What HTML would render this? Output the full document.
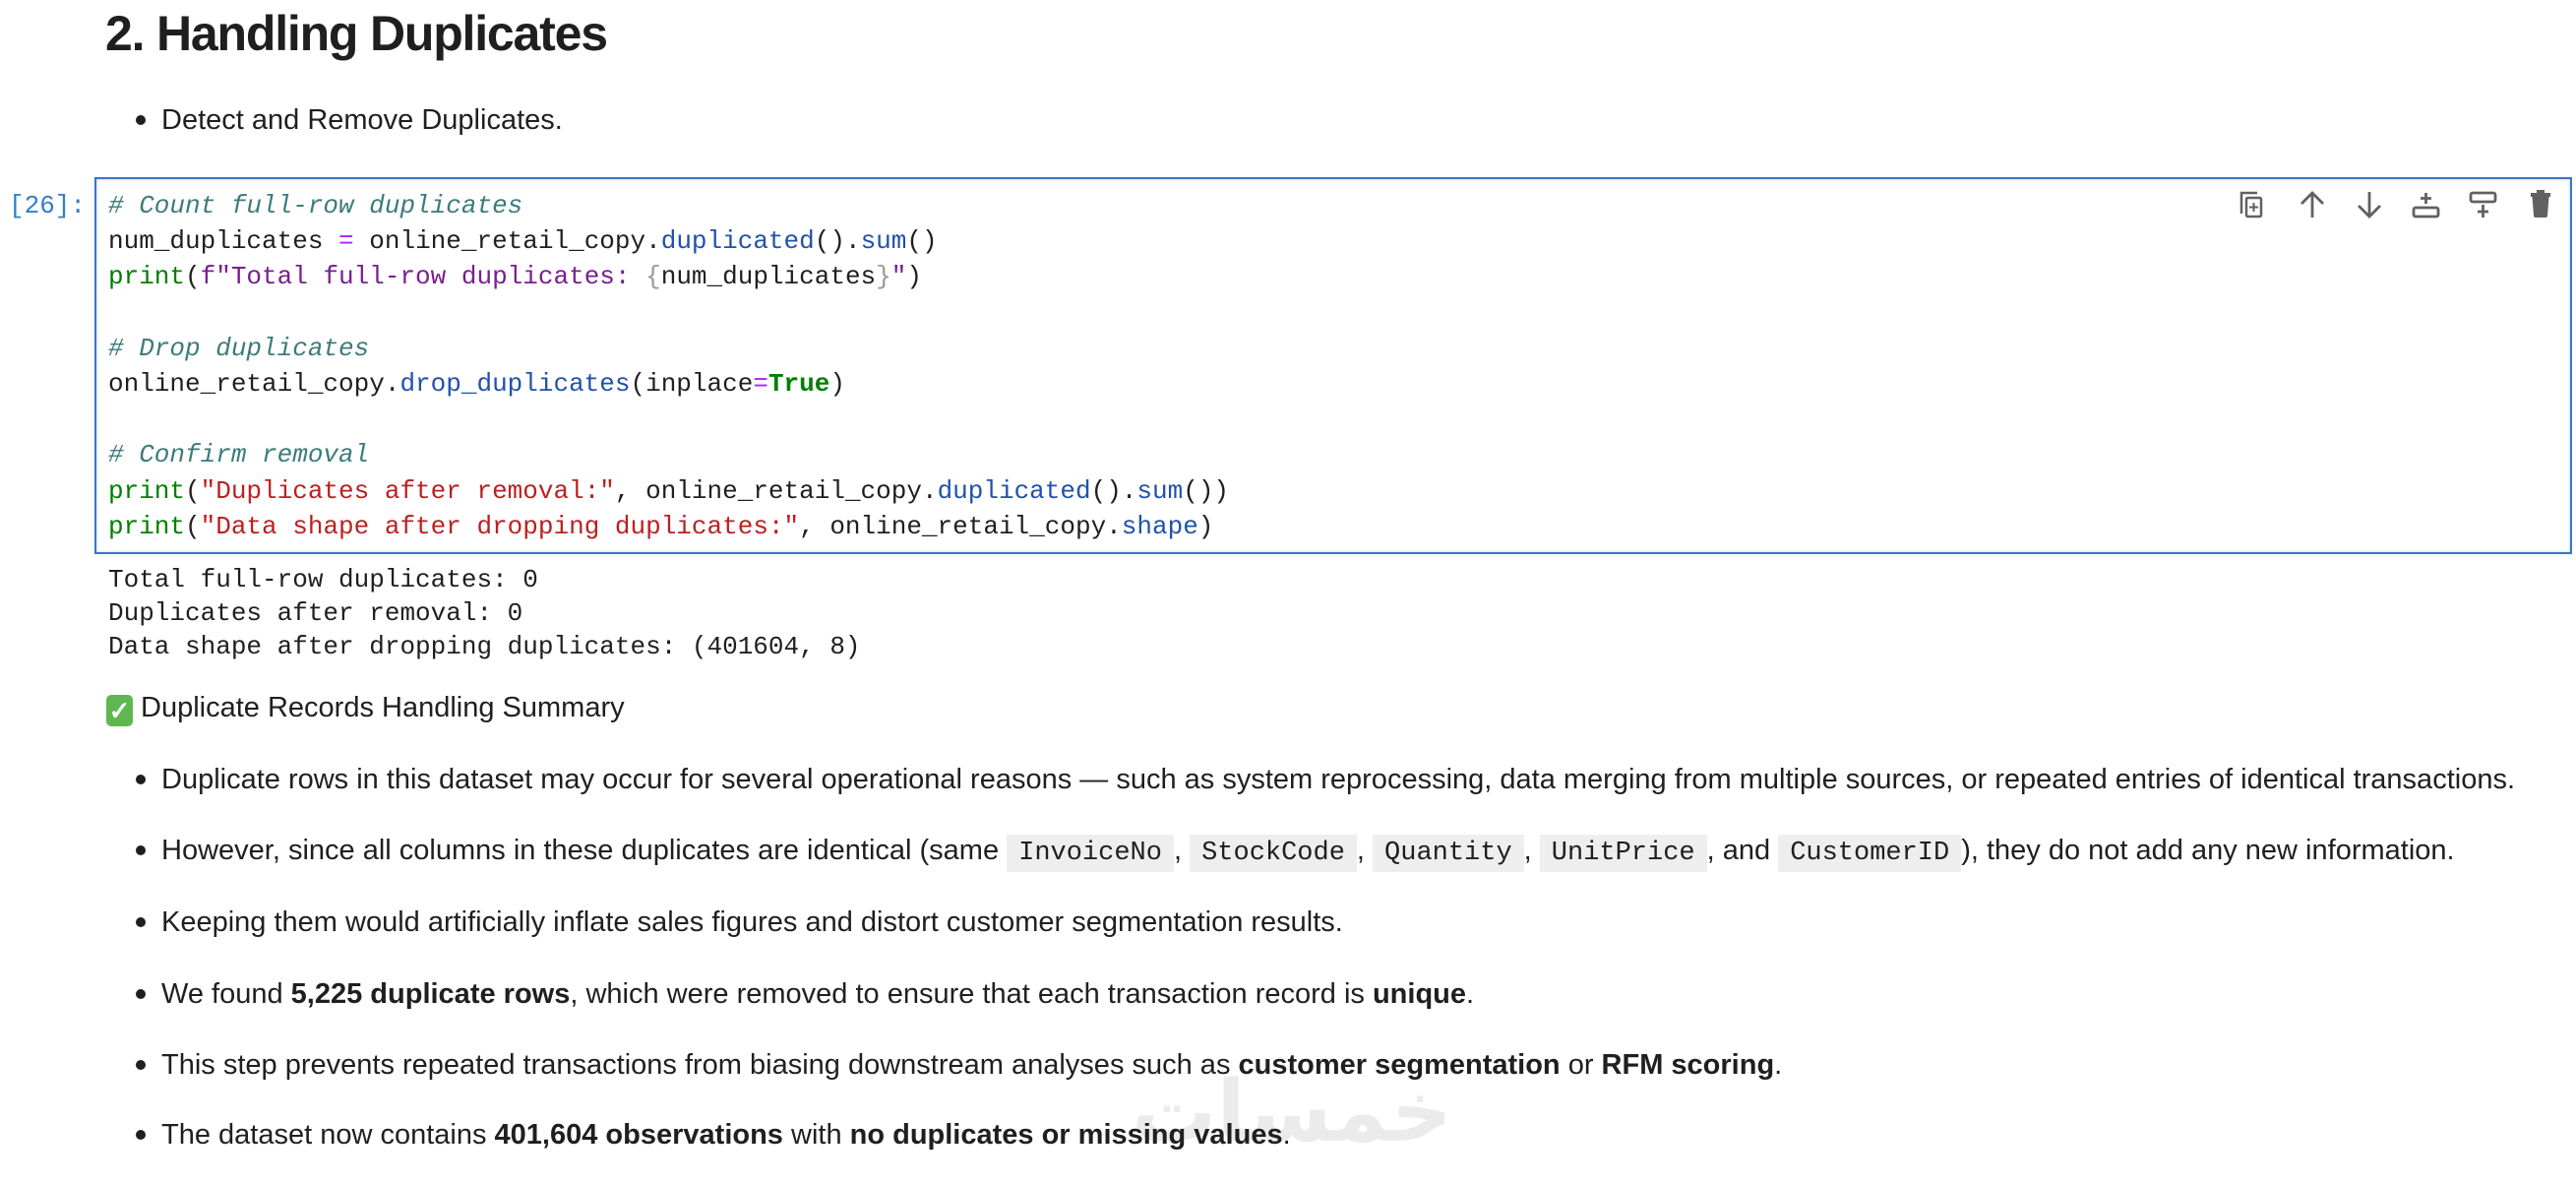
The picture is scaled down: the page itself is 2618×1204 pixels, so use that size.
<!DOCTYPE html>
<html><head><meta charset="utf-8"><style>
body{margin:0;width:2618px;height:1204px;background:#fff;position:relative;overflow:hidden;font-family:"Liberation Sans",sans-serif;color:#1f1f1f}
.a{position:absolute;white-space:pre}
h1{position:absolute;left:107px;top:5px;margin:0;font-size:50px;font-weight:bold;letter-spacing:-1.2px;color:#1f1f1f}
.t{font-size:29px;line-height:36px}
.m{font-family:"Liberation Mono",monospace;font-size:26px;line-height:36.2px}
.dot{position:absolute;left:138px;width:10px;height:10px;border-radius:50%;background:#1f1f1f}
.cell{position:absolute;left:96px;top:180px;width:2514px;height:379px;border:2px solid #3a74c9;box-shadow:inset 0 0 3px rgba(58,116,201,.35)}
.c{color:#3d7b7b;font-style:italic}.b{color:#008000}.f{color:#2152a8}.s{color:#ba2121}.p{color:#aa22ff}.fs{color:#7a1f91}.g{color:#999}
code{font-family:"Liberation Mono",monospace;font-size:27px;background:#eee;padding:4px 12px}
b{font-weight:bold}
.ic{position:absolute;top:193px}
</style></head><body>
<h1>2. Handling Duplicates</h1>
<div class="dot" style="top:117px"></div>
<div class="a t" style="left:164px;top:104px">Detect and Remove Duplicates.</div>
<div class="a m" style="left:9px;top:191px;color:#307fc1">[26]:</div>
<div class="cell"></div>
<div class="a m" style="left:110px;top:191px"><span class="c"># Count full-row duplicates</span>
num_duplicates <span class="p">=</span> online_retail_copy.<span class="f">duplicated</span>().<span class="f">sum</span>()
<span class="b">print</span>(<span class="fs">f"Total full-row duplicates: </span><span class="g">{</span>num_duplicates<span class="g">}</span><span class="fs">"</span>)

<span class="c"># Drop duplicates</span>
online_retail_copy.<span class="f">drop_duplicates</span>(inplace<span class="p">=</span><b class="b">True</b>)

<span class="c"># Confirm removal</span>
<span class="b">print</span>(<span class="s">"Duplicates after removal:"</span>, online_retail_copy.<span class="f">duplicated</span>().<span class="f">sum</span>())
<span class="b">print</span>(<span class="s">"Data shape after dropping duplicates:"</span>, online_retail_copy.<span class="f">shape</span>)</div>
<svg class="ic" style="left:2276px" width="28" height="30" viewBox="0 0 28 30" fill="none" stroke="#616161" stroke-width="2.5"><path d="M2 24V3h16"/><rect x="7" y="8" width="15" height="19" rx="1.5"/><path d="M14.5 13v9M10 17.5h9" stroke-width="2"/></svg>
<svg class="ic" style="left:2336px" width="28" height="30" viewBox="0 0 28 30" fill="none" stroke="#616161" stroke-width="2.8"><path d="M14 28V4M3 14L14 3l11 11"/></svg>
<svg class="ic" style="left:2394px" width="28" height="30" viewBox="0 0 28 30" fill="none" stroke="#616161" stroke-width="2.8"><path d="M14 2v24M3 16l11 11 11-11"/></svg>
<svg class="ic" style="left:2451px" width="30" height="30" viewBox="0 0 30 30" fill="none" stroke="#616161" stroke-width="2.8"><rect x="2" y="18" width="25" height="9" rx="2"/><path d="M14.5 3v11M9 8.5h11"/></svg>
<svg class="ic" style="left:2509px" width="30" height="30" viewBox="0 0 30 30" fill="none" stroke="#616161" stroke-width="2.8"><rect x="2" y="3" width="25" height="9" rx="2"/><path d="M14.5 15v13M9 22h11"/></svg>
<svg class="ic" style="left:2571px" width="22" height="30" viewBox="0 0 22 30"><path d="M1 3h20v4H1z" fill="#616161"/><path d="M7 0h8v3H7z" fill="#616161"/><path d="M2.5 7h17l-1.5 19a2 2 0 0 1-2 2H6a2 2 0 0 1-2-2z" fill="#616161"/></svg>
<div class="a m" style="left:110px;top:572px;line-height:34px;color:#1f1f1f">Total full-row duplicates: 0
Duplicates after removal: 0
Data shape after dropping duplicates: (401604, 8)</div>
<div class="a" style="left:108px;top:706px;width:27px;height:32px;border-radius:5px;background:#5eb84f;color:#fff;font-size:26px;font-weight:bold;text-align:center;line-height:32px">✓</div>
<div class="a t" style="left:143px;top:701px">Duplicate Records Handling Summary</div>
<div class="dot" style="top:787px"></div>
<div class="a t" style="left:164px;top:774px">Duplicate rows in this dataset may occur for several operational reasons — such as system reprocessing, data merging from multiple sources, or repeated entries of identical transactions.</div>
<div class="dot" style="top:859px"></div>
<div class="a t" style="left:164px;top:846px">However, since all columns in these duplicates are identical (same <code>InvoiceNo</code>, <code>StockCode</code>, <code>Quantity</code>, <code>UnitPrice</code>, and <code>CustomerID</code>), they do not add any new information.</div>
<div class="dot" style="top:932px"></div>
<div class="a t" style="left:164px;top:919px">Keeping them would artificially inflate sales figures and distort customer segmentation results.</div>
<div class="dot" style="top:1005px"></div>
<div class="a t" style="left:164px;top:992px">We found <b>5,225 duplicate rows</b>, which were removed to ensure that each transaction record is <b>unique</b>.</div>
<div class="dot" style="top:1077px"></div>
<div class="a t" style="left:164px;top:1064px">This step prevents repeated transactions from biasing downstream analyses such as <b>customer segmentation</b> or <b>RFM scoring</b>.</div>
<div class="a" style="left:1150px;top:1080px;font-family:'DejaVu Sans',sans-serif;font-size:86px;font-weight:bold;color:#ebebeb">خمسات</div>
<div class="dot" style="top:1148px"></div>
<div class="a t" style="left:164px;top:1135px">The dataset now contains <b>401,604 observations</b> with <b>no duplicates or missing values</b>.</div>
</body></html>
